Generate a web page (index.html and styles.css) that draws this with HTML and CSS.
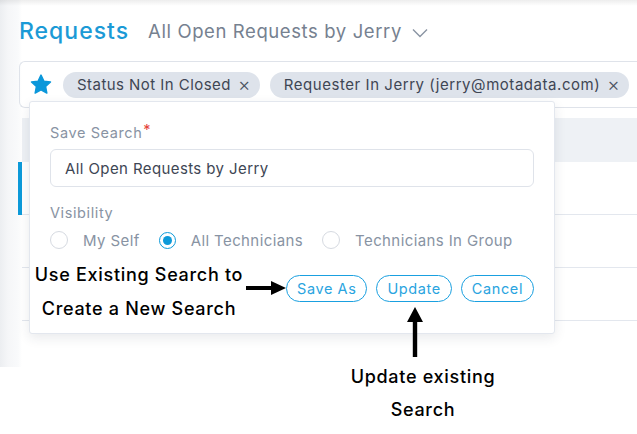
FILE: index.html
```html
<!DOCTYPE html>
<html lang="en">
<head>
    <meta charset="UTF-8">
    <meta name="viewport" content="width=device-width, initial-scale=1.0">
    <title>Requests - Save Search</title>
    <link rel="stylesheet" href="styles.css">
</head>
<body>

    <div class="app">
        <div class="page-head">
            <h1 class="title">Requests</h1>
            <span class="view-name">All Open Requests by Jerry</span>
            <svg class="chevron" width="16" height="10" viewBox="0 0 16 10">
                <path d="M1 1.5 L8 8.5 L15 1.5" fill="none" stroke="#8a94a3" stroke-width="1.4"/>
            </svg>
        </div>

        <div class="filter-bar">
            <svg class="star" width="22" height="21" viewBox="0 0 24 23">
                <path d="M12 1.2 L15.1 7.8 L22.4 8.7 L17 13.7 L18.4 20.9 L12 17.3 L5.6 20.9 L7 13.7 L1.6 8.7 L8.9 7.8 Z"
                      fill="#0b97da" stroke="#0b97da" stroke-width="1.6" stroke-linejoin="round"/>
            </svg>
            <span class="chip">Status Not In Closed <span class="chip-x">&times;</span></span>
            <span class="chip chip-wide">Requester In Jerry (jerry@motadata.com) <span class="chip-x">&times;</span></span>
        </div>

        <div class="table">
            <div class="table-head"></div>
            <div class="row row-active"></div>
            <div class="row"></div>
            <div class="row"></div>
        </div>

        <!-- save search popover -->
        <div class="popup">
            <label class="field-label">Save Search<span class="required">*</span></label>
            <input class="text-input" type="text" value="All Open Requests by Jerry">

            <label class="field-label visibility-label">Visibility</label>
            <div class="radios">
                <span class="radio"><span class="radio-dot"></span>My Self</span>
                <span class="radio checked"><span class="radio-dot"></span>All Technicians</span>
                <span class="radio"><span class="radio-dot"></span>Technicians In Group</span>
            </div>

            <div class="actions">
                <button class="btn">Save As</button>
                <button class="btn">Update</button>
                <button class="btn">Cancel</button>
            </div>
        </div>

        <!-- annotations -->
        <div class="note note-left">Use Existing Search to<br>Create a New Search</div>
        <svg class="arrow-right" width="44" height="18" viewBox="0 0 44 18">
            <rect x="2" y="7" width="28" height="4" fill="#000"/>
            <polygon points="27,2 42,9 27,16" fill="#000"/>
        </svg>
        <svg class="arrow-up" width="18" height="52" viewBox="0 0 18 52">
            <polygon points="9,1 17,16 1,16" fill="#000"/>
            <rect x="6.8" y="14" width="4.4" height="37" fill="#000"/>
        </svg>
    </div>

    <div class="note note-bottom">Update existing<br>Search</div>

</body>
</html>
```

FILE: styles.css
```css
body {
    margin: 0;
    font-family: Inter, "Open Sans", sans-serif;
    background: #fff;
}
.app {
    position: relative;
    width: 637px;
    height: 367px;
    overflow: hidden;
    background: linear-gradient(to right, #eceef1 0, #f5f6f8 8px, #f9fafb 18px, #fff 22px);
}
.app::before {
    content: "";
    position: absolute;
    left: 0;
    right: 0;
    top: 0;
    height: 6px;
    background: linear-gradient(to bottom, rgba(0,0,0,.07), rgba(0,0,0,0));
}
.page-head {
    display: flex;
    align-items: center;
    padding: 16px 0 0 19px;
    height: 30px;
}
.title {
    margin: 0;
    font-size: 23px;
    font-weight: 500;
    color: #1b9ad6;
    letter-spacing: 1px;
}
.view-name {
    margin-left: 19px;
    font-size: 18.5px;
    letter-spacing: 0.6px;
    color: #768190;
}
.chevron {
    margin-left: 10px;
    margin-top: 3px;
}
.filter-bar {
    display: flex;
    align-items: center;
    gap: 10px;
    margin: 15px 0 0 19px;
    height: 45px;
    border: 1px solid #dfe3ea;
    border-right: none;
    border-radius: 6px 0 0 6px;
    padding-left: 10px;
    white-space: nowrap;
}
.star {
    flex: none;
    margin-right: 1px;
}
.chip {
    flex: none;
    display: flex;
    align-items: center;
    height: 26px;
    padding: 0 9px 0 14px;
    border-radius: 13px;
    background: #dee3eb;
    color: #3e4654;
    font-size: 15px;
    letter-spacing: 0.45px;
}
.chip-wide {
    letter-spacing: 0.55px;
}
.chip-x {
    margin-left: 7px;
    font-size: 19px;
    font-weight: 300;
    color: #4a5260;
}
.table {
    margin: 10px 0 0 18px;
}
.table-head {
    margin-left: 4px;
    height: 44px;
    background: #eef1f5;
}
.row {
    margin-left: 4px;
    height: 52px;
    border-bottom: 1px solid #e3e7ee;
}
.row-active {
    box-shadow: -4px 0 0 #0d9ad9;
}
.popup {
    position: absolute;
    left: 29px;
    top: 101px;
    width: 484px;
    height: 213px;
    padding: 18px 20px 0 20px;
    background: #fff;
    border: 1px solid #e3e7ee;
    border-radius: 3px;
    box-shadow: 0 4px 12px rgba(40, 50, 70, .10);
    display: flex;
    flex-direction: column;
}
.field-label {
    font-size: 14.5px;
    letter-spacing: 0.6px;
    line-height: 20px;
    color: #8893a3;
}
.required {
    color: #e5443b;
    margin-left: 1px;
    vertical-align: 3px;
}
.text-input {
    margin-top: 6px;
    height: 38px;
    box-sizing: border-box;
    width: 100%;
    padding: 0 14px;
    border: 1px solid #dfe3ea;
    border-radius: 6px;
    font-family: inherit;
    font-size: 15px;
    letter-spacing: 0.4px;
    color: #3e4654;
    outline: none;
}
.visibility-label {
    margin-top: 16px;
}
.radios {
    display: flex;
    align-items: center;
    margin-top: 7px;
    height: 20px;
}
.radio {
    display: flex;
    align-items: center;
    margin-right: 19px;
    font-size: 15px;
    letter-spacing: 0.4px;
    color: #8893a3;
}
.radio-dot {
    width: 16px;
    height: 16px;
    margin-right: 15px;
    border: 1px solid #d6dae1;
    border-radius: 50%;
    position: relative;
}
.radio.checked .radio-dot {
    border: 1.5px solid #0d9ad9;
    width: 15px;
    height: 15px;
}
.radio.checked .radio-dot::after {
    content: "";
    position: absolute;
    left: 3px;
    top: 3px;
    width: 9px;
    height: 9px;
    border-radius: 50%;
    background: #0d9ad9;
}
.actions {
    display: flex;
    justify-content: flex-end;
    gap: 9px;
    margin-top: 25px;
}
.btn {
    height: 27px;
    padding: 0 10px;
    border: 1px solid #1aa0e0;
    border-radius: 14px;
    background: #fff;
    color: #2aa4e0;
    font-family: inherit;
    font-size: 14.5px;
    letter-spacing: 0.6px;
}
.note {
    font-size: 18px;
    font-weight: 500;
    letter-spacing: 0.7px;
    color: #000;
    text-align: center;
    line-height: 34px;
}
.note-left {
    position: absolute;
    left: 30px;
    top: 258px;
    width: 218px;
}
.arrow-right {
    position: absolute;
    left: 244px;
    top: 279px;
}
.arrow-up {
    position: absolute;
    left: 406px;
    top: 306px;
}
.note-bottom {
    width: 200px;
    margin: -7px 0 0 323px;
    line-height: 33px;
}
```
